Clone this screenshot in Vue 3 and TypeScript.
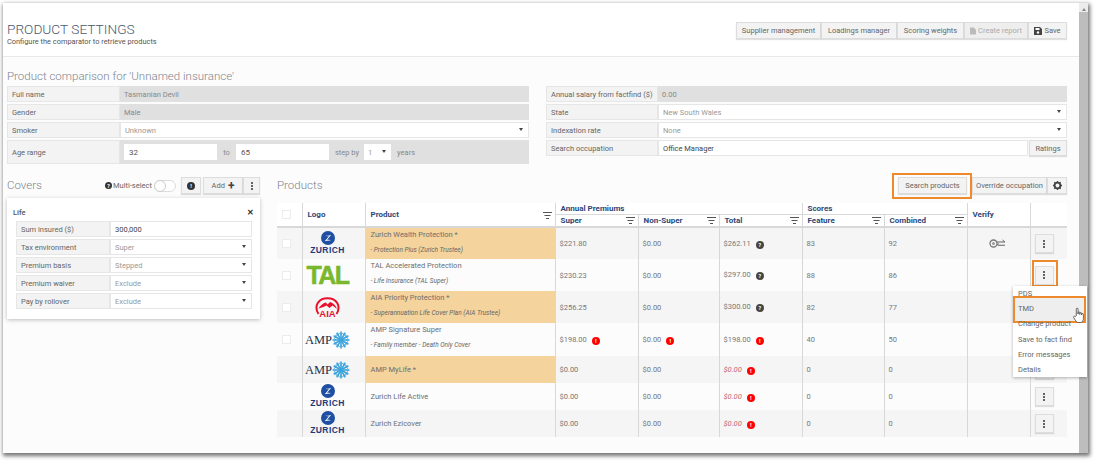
<script setup lang="ts">
interface Prod {
  logo: string; name: string; sub?: string; hl: boolean; check: boolean;
  sup: string; non: string; total: string; feat: string; comb: string;
  supErr?: boolean; nonErr?: boolean; totIcon: 'q' | 'e'; totRed?: boolean; h: number; verify?: boolean;
}
const products: Prod[] = [
  { logo: 'zurich', name: 'Zurich Wealth Protection *', sub: '- Protection Plus (Zurich Trustee)', hl: true, check: true, sup: '$221.80', non: '$0.00', total: '$262.11', feat: '83', comb: '92', totIcon: 'q', h: 32, verify: true },
  { logo: 'tal', name: 'TAL Accelerated Protection', sub: '- Life Insurance (TAL Super)', hl: false, check: true, sup: '$230.23', non: '$0.00', total: '$297.00', feat: '88', comb: '86', totIcon: 'q', h: 32 },
  { logo: 'aia', name: 'AIA Priority Protection *', sub: '- Superannuation Life Cover Plan (AIA Trustee)', hl: true, check: true, sup: '$256.25', non: '$0.00', total: '$300.00', feat: '82', comb: '77', totIcon: 'q', h: 32 },
  { logo: 'amp', name: 'AMP Signature Super', sub: '- Family member - Death Only Cover', hl: false, check: true, sup: '$198.00', non: '$0.00', total: '$198.00', feat: '40', comb: '50', supErr: true, nonErr: true, totIcon: 'e', h: 33 },
  { logo: 'amp', name: 'AMP MyLife *', hl: true, check: false, sup: '$0.00', non: '$0.00', total: '$0.00', feat: '0', comb: '0', totIcon: 'e', totRed: true, h: 27 },
  { logo: 'zurich', name: 'Zurich Life Active', hl: false, check: false, sup: '$0.00', non: '$0.00', total: '$0.00', feat: '0', comb: '0', totIcon: 'e', totRed: true, h: 27 },
  { logo: 'zurich', name: 'Zurich Ezicover', hl: false, check: false, sup: '$0.00', non: '$0.00', total: '$0.00', feat: '0', comb: '0', totIcon: 'e', totRed: true, h: 27 },
];
const coverRows = [
  { label: 'Tax environment', value: 'Super' },
  { label: 'Premium basis', value: 'Stepped' },
  { label: 'Premium waiver', value: 'Exclude' },
  { label: 'Pay by rollover', value: 'Exclude' },
];
const menu = ['PDS', 'TMD', 'Change product', 'Save to fact find', 'Error messages', 'Details'];
const flakes = [0, 30, 60, 90, 120, 150];
const subCols = ['Super', 'Non-Super', 'Total'];
const scoreCols = ['Feature', 'Combined'];
</script>

<template>
  <div class="shot">
    <div class="win">
      <div class="main">
        <header class="head">
          <div>
            <h1>PRODUCT SETTINGS</h1>
            <p>Configure the comparator to retrieve products</p>
          </div>
          <div class="btn-group">
            <button class="btn" style="width:85px">Supplier management</button>
            <button class="btn" style="width:76px">Loadings manager</button>
            <button class="btn" style="width:67px">Scoring weights</button>
            <button class="btn off" style="width:64px">
              <svg width="6" height="8" viewBox="0 0 7 8"><path d="M0 0h4.500l2.500 2.500v5.500h-7z" fill="#bbb"/></svg>
              Create report
            </button>
            <button class="btn" style="width:39px">
              <svg width="8" height="8" viewBox="0 0 8 8"><path d="M0 0h6l2 2v6h-8z" fill="#444"/><rect x="1.500" y="1" width="4" height="2" fill="#fff"/><circle cx="4" cy="5.500" r="1.200" fill="#fff"/></svg>
              Save
            </button>
          </div>
        </header>

        <h2 class="sec">Product comparison for 'Unnamed insurance'</h2>
        <div class="forms">
          <div class="form left">
            <div class="row"><span class="lab">Full name</span><span class="val ro">Tasmanian Devil</span></div>
            <div class="row"><span class="lab">Gender</span><span class="val ro">Male</span></div>
            <div class="row"><span class="lab">Smoker</span><span class="val sel">Unknown<i class="caret"></i></span></div>
            <div class="row tall">
              <span class="lab">Age range</span>
              <span class="val ro age">
                <span class="inp">32</span><span class="to">to</span><span class="inp">65</span>
                <span class="step">step by</span>
                <span class="mini">1<i class="caret"></i></span>
                <span class="yrs">years</span>
              </span>
            </div>
          </div>
          <div class="form right">
            <div class="row"><span class="lab">Annual salary from factfind ($)</span><span class="val ro">0.00</span></div>
            <div class="row"><span class="lab">State</span><span class="val sel">New South Wales<i class="caret"></i></span></div>
            <div class="row"><span class="lab">Indexation rate</span><span class="val sel">None<i class="caret"></i></span></div>
            <div class="row">
              <span class="lab">Search occupation</span>
              <span class="val occ">Office Manager</span>
              <button class="btn ratings">Ratings</button>
            </div>
          </div>
        </div>

        <div class="lower">
          <section class="covers">
            <div class="bar">
              <h2 class="sec">Covers</h2>
              <div class="ms">
                <span class="qi">?</span><span>Multi-select</span><span class="toggle"><i></i></span>
              </div>
              <button class="btn sq" style="width:20px"><span class="info">!</span></button>
              <div class="btn-group add">
                <button class="btn" style="width:40px">Add <b class="plus">+</b></button>
                <button class="btn" style="width:17px"><span class="dots"><i></i><i></i><i></i></span></button>
              </div>
            </div>
            <div class="card">
              <div class="card-h"><b>Life</b><span class="x">✕</span></div>
              <div class="crow"><span class="lab">Sum insured ($)</span><span class="val occ">300,000</span></div>
              <div v-for="r in coverRows" :key="r.label" class="crow">
                <span class="lab">{{ r.label }}</span><span class="val sel">{{ r.value }}<i class="caret"></i></span>
              </div>
            </div>
          </section>

          <section class="products">
            <div class="bar pbar">
              <h2 class="sec">Products</h2>
              <div class="pbtns">
                <button class="btn search" style="width:69px">Search products</button>
                <div class="btn-group">
                  <button class="btn" style="width:75px">Override occupation</button>
                  <button class="btn" style="width:20px">
                    <svg width="9" height="9" viewBox="0 0 10 10"><circle cx="5" cy="5" r="3.200" fill="none" stroke="#444" stroke-width="2"/><path d="M5 0v2M5 8v2M0 5h2M8 5h2M1.500 1.500l1.400 1.400M7.100 7.100l1.400 1.400M8.500 1.500L7.100 2.900M2.900 7.100L1.500 8.500" stroke="#444" stroke-width="1.500"/></svg>
                  </button>
                </div>
              </div>
            </div>
            <table class="tbl">
              <colgroup>
                <col style="width:25px"><col style="width:63px"><col style="width:190px"><col style="width:83px"><col style="width:81px"><col style="width:83px"><col style="width:82px"><col style="width:83px"><col style="width:63px"><col style="width:37px">
              </colgroup>
              <thead>
                <tr class="h1">
                  <th rowspan="2" class="nb"><span class="chk"></span></th>
                  <th rowspan="2">Logo</th>
                  <th rowspan="2" class="fp">Product<svg class="flt" width="9" height="7" viewBox="0 0 9 7"><path d="M0 .5h9M1.500 3.500h6M3 6.500h3" stroke="#555"/></svg></th>
                  <th colspan="3">Annual Premiums</th>
                  <th colspan="2">Scores</th>
                  <th rowspan="2" class="vf">Verify</th>
                  <th rowspan="2"></th>
                </tr>
                <tr class="h2">
                  <th v-for="c in [...subCols, ...scoreCols]" :key="c" class="fp">{{ c }}<svg class="flt" width="9" height="7" viewBox="0 0 9 7"><path d="M0 .5h9M1.500 3.500h6M3 6.500h3" stroke="#555"/></svg></th>
                </tr>
              </thead>
              <tbody>
                <tr v-for="(p, i) in products" :key="i" :class="{ odd: i % 2 === 0 }" :style="{ height: p.h + 'px' }">
                  <td class="nb cc"><span v-if="p.check" class="chk"></span></td>
                  <td class="logo">
                    <div v-if="p.logo === 'zurich'" class="zurich">
                      <svg width="14" height="14" viewBox="0 0 15 15"><circle cx="7.500" cy="7.500" r="7.500" fill="#1f4fa3"/><path d="M4 4.500c2.500 1 4 .5 7-.5L6.500 9.500c2 0 3 0 4.500 1-2.500-.5-4.500 0-7 .5l4.500-5.500c-2 .3-3 0-4.500-1z" fill="#fff"/></svg>
                      <span>ZURICH</span>
                    </div>
                    <div v-else-if="p.logo === 'tal'" class="tal">TAL</div>
                    <div v-else-if="p.logo === 'aia'" class="aia">
                      <svg width="25" height="18" viewBox="0 0 25 18"><path d="M3.500 17C-1.500 9 3.500 1.200 12.500 1.200S26.500 9 21.500 17" fill="none" stroke="#e8112d" stroke-width="2"/><path d="M3.500 11.500C6 7.500 8.500 6 11 5.500l1.500 2L15 5c3.500 1 5.500 3.500 7 7l-4.500-3.500-3 2.500-3-2.500-3 1.500z" fill="#e8112d"/></svg>
                      <span>AIA</span>
                    </div>
                    <div v-else class="amp">
                      <span>AMP</span>
                      <svg width="18" height="18" viewBox="-9 -9 18 18">
                        <g v-for="a in flakes" :key="a" :transform="`rotate(${a})`"><path d="M0-8.500V8.500" stroke="#3ea5dc" stroke-width="1.600"/><path d="M-1.800-7L0-5.500 1.800-7M-1.800 7L0 5.500 1.800 7" fill="none" stroke="#3ea5dc" stroke-width=".8"/></g>
                      </svg>
                    </div>
                  </td>
                  <td class="pn" :class="{ hl: p.hl, top: p.sub }">
                    <div>{{ p.name }}</div>
                    <div v-if="p.sub" class="sub">{{ p.sub }}</div>
                  </td>
                  <td>{{ p.sup }}<span v-if="p.supErr" class="err">!</span></td>
                  <td>{{ p.non }}<span v-if="p.nonErr" class="err">!</span></td>
                  <td>
                    <span :class="{ redt: p.totRed }">{{ p.total }}</span>
                    <span v-if="p.totIcon === 'q'" class="qi big">?</span>
                    <span v-else class="err">!</span>
                  </td>
                  <td>{{ p.feat }}</td>
                  <td>{{ p.comb }}</td>
                  <td class="cc">
                    <svg v-if="p.verify" class="vicon" width="17" height="9" viewBox="0 0 17 9"><circle cx="4.500" cy="4.500" r="3.500" fill="none" stroke="#777" stroke-width="1.300"/><circle cx="4.500" cy="4.500" r="1.500" fill="#999"/><path d="M8 3h8M9 6.200h7" stroke="#666" stroke-width="1.100"/><path d="M13.500 1l2.500 2M10 4.500L8 6.200" fill="none" stroke="#666"/></svg>
                  </td>
                  <td class="cc act">
                    <button class="btn more" :class="{ mark: i === 1 }"><span class="dots"><i></i><i></i><i></i></span></button>
                  </td>
                </tr>
              </tbody>
            </table>
          </section>
        </div>
      </div>
      <div class="scroll"><i class="up"></i><div class="thumb"></div></div>

      <ul class="menu">
        <li v-for="m in menu" :key="m" :class="{ tmd: m === 'TMD' }">{{ m }}
          <svg v-if="m === 'TMD'" class="hand" width="11" height="16" viewBox="0 0 12 18"><path d="M3.500 10V2.300a1 1 0 0 1 2 0V8V6.500a1 1 0 0 1 2 0V8.500V7.300a1 1 0 0 1 2 0V9V8.300a1 1 0 0 1 2 0v4.700c0 2-1 4.500-3 4.500H5.500c-1.500 0-2-1-3-2.500L.600 12c-.8-1.300 1-2.300 1.900-1.200z" fill="#fff" stroke="#444" stroke-width=".9"/></svg>
        </li>
      </ul>
    </div>
  </div>
</template>

<style scoped>
.shot { width: 1100px; height: 466px; padding: 3px 0 0 3px; box-sizing: border-box; background: #fff; overflow: hidden; font-family: Roboto, "Liberation Sans", sans-serif; font-size: 7.500px; color: #777; }
.win { position: relative; width: 1085px; height: 450px; display: flex; background: #fcfcfc; box-shadow: 1px 2px 4px 1px rgba(0,0,0,.55); }
.main { width: 1076px; box-sizing: border-box; padding: 0 0 0 4px; }
.head { height: 54px; margin-left: -4px; padding: 19px 12px 0 4px; box-sizing: border-box; display: flex; justify-content: space-between; background: #fff; border-bottom: 1px solid #e8e8e8; }
h1 { margin: 0; font-size: 13.700px; line-height: 14px; font-weight: 300; color: #4a5a70; }
.head p { margin: 1px 0 0; font-size: 7.400px; line-height: 10px; color: #555; }
.btn-group { display: flex; height: 17px; }
.btn { height: 17px; padding: 0; font: inherit; color: #666; background: #f3f3f3; border: 1px solid #ddd; box-shadow: 0 1px 1px rgba(0,0,0,.12); display: inline-flex; align-items: center; justify-content: center; gap: 2px; box-sizing: border-box; white-space: nowrap; }
.btn.off { color: #aaa; background: #eee; }
.sec { margin: 0; font-size: 11.500px; line-height: 16px; font-weight: 300; color: #7d8490; }
.head + .sec { margin-top: 11px; }
.forms { display: flex; gap: 17px; margin-top: 2px; padding-right: 12px; }
.form { display: flex; flex-direction: column; gap: 2px; }
.left { width: 522px; }
.right { width: 521px; }
.row { display: flex; height: 16px; }
.row.tall { height: 24px; }
.lab { flex: none; box-sizing: border-box; padding-left: 4px; display: flex; align-items: center; background: #f3f3f3; border: 1px solid #e6e6e6; color: #666; white-space: nowrap; }
.left .lab { width: 113px; }
.right .lab { width: 112px; }
.val { flex: 1; min-width: 0; box-sizing: border-box; padding-left: 4px; display: flex; align-items: center; position: relative; }
.ro { background: #e0e0e0; color: #888; }
.sel { background: #fff; border: 1px solid #e6e6e6; color: #999; }
.occ { background: #fff; border: 1px solid #e6e6e6; color: #444; }
.caret { position: absolute; right: 5px; top: 50%; margin-top: -2px; width: 0; height: 0; border: 2.500px solid transparent; border-top: 3.500px solid #444; border-bottom: 0; }
.age { padding-left: 4px; }
.inp { width: 93px; height: 16px; box-sizing: border-box; background: #fff; color: #555; padding-left: 5px; display: flex; align-items: center; font-size: 8px; }
.to { width: 19px; text-align: center; }
.step { margin-left: 6px; }
.mini { position: relative; width: 27px; height: 16px; margin-left: 5px; box-sizing: border-box; padding-left: 4px; background: #fff; display: flex; align-items: center; color: #999; }
.yrs { margin-left: 6px; }
.ratings { width: 38px; height: 16px; flex: none; margin-left: 1px; }
.lower { display: flex; margin-top: 11px; }
.covers { width: 253px; flex: none; }
.bar { display: flex; align-items: center; height: 21px; }
.bar .sec { flex: 1; margin-top: -2px; }
.covers .bar .sec { flex: none; width: 98px; }
.ms { width: 76px; display: flex; align-items: center; color: #666; }
.qi { width: 7px; height: 7px; border-radius: 50%; background: #333; color: #fff; font-size: 6px; font-weight: 700; line-height: 7px; text-align: center; display: inline-block; margin-right: 1px; flex: none; }
.qi.big { width: 8px; height: 8px; line-height: 8px; margin-left: 5px; margin-right: 0; vertical-align: -1px; background: #444; }
.toggle { width: 22px; height: 12px; margin-left: 2px; border: 1px solid #ddd; border-radius: 6px; box-sizing: border-box; background: #fff; position: relative; flex: none; }
.toggle i { position: absolute; left: -1px; top: -1px; width: 12px; height: 12px; box-sizing: border-box; border-radius: 50%; background: #fff; border: 1px solid #ccc; }
.info { width: 8px; height: 8px; border-radius: 50%; background: #333; color: #fff; font-size: 6px; font-weight: 700; line-height: 8px; text-align: center; }
.add { margin-left: 2px; }
.plus { font-size: 12px; line-height: 8px; color: #444; margin-left: 1px; }
.dots { display: inline-flex; flex-direction: column; gap: 1px; }
.dots i { width: 2px; height: 2px; background: #333; border-radius: 50%; display: block; }
.card { width: 253px; height: 121px; margin-top: 2px; box-sizing: border-box; padding: 0 8px 0 9px; background: #fff; box-shadow: 0 1px 4px rgba(0,0,0,.25); display: flex; flex-direction: column; gap: 2px; }
.card-h { height: 21px; margin: 0 -2px 0 -3px; padding-top: 7px; box-sizing: border-box; flex: none; display: flex; justify-content: space-between; align-items: center; }
.card-h b { font-weight: 500; color: #555; }
.x { color: #333; font-size: 8px; font-weight: 700; }
.crow { display: flex; height: 16px; flex: none; }
.crow .lab { width: 94px; }
.products { width: 790px; flex: none; margin-left: 17px; }
.pbtns { display: flex; gap: 5px; margin-right: 0; }
.search { position: relative; }
.search::after { content: ""; position: absolute; left: -7px; top: -5px; right: -6px; bottom: -6px; border: 2px solid #ef8a2c; }
.tbl { width: 790px; margin-top: 7px; border-collapse: collapse; table-layout: fixed; }
.tbl th { text-align: left; font-weight: 700; color: #2d4877; padding: 0 0 0 5px; border-left: 1px solid #d8d8d8; position: relative; background: #fff; font-size: 8px; }
.tbl th.nb, .tbl td.nb { border-left: 0; padding-left: 5px; }
.h1 { height: 11px; }
.h2 { height: 13px; }
.h1 th { vertical-align: middle; }
.h2 th { border-top: 1px solid #d8d8d8; }
thead { border-bottom: 2px solid #d8d8d8; }
.flt { position: absolute; right: 3px; bottom: 2px; }
th[rowspan] .flt { bottom: 7px; }
.tbl td { padding: 0 0 0 4px; border-left: 1px solid #d8d8d8; background: #fcfcfc; color: #777; white-space: nowrap; overflow: hidden; }
.odd td { background: #f5f5f5; }
.tbl td.hl { background: #f4d39c; }
.tbl td.pn { padding-left: 5px; color: #6e6e6e; line-height: 12px; }
.tbl td.top { vertical-align: top; padding-top: 1px; }
.sub { font-style: italic; font-size: 6.500px; margin-top: 4px; line-height: 10px; color: #666; }
.cc { text-align: center; }
.tbl td.cc { padding: 0; }
.tbl td.nb.cc { text-align: left; padding-left: 5px; }
.chk { display: block; width: 9px; height: 9px; box-sizing: border-box; background: #fff; border: 1px solid #ececec; }
.logo { text-align: center; }
.tbl td.logo { padding: 0 12px 0 0; overflow: visible; }
.zurich { display: flex; flex-direction: column; align-items: center; line-height: 11px; color: #1e3a7a; font-weight: 700; font-size: 8.500px; letter-spacing: .4px; font-family: "Liberation Sans", sans-serif; }
.tal { font: 700 25px/24px "Liberation Sans", sans-serif; color: #79b82d; letter-spacing: -1.500px; -webkit-text-stroke: .5px #79b82d; }
.aia { display: flex; flex-direction: column; align-items: center; color: #e8112d; font: 700 9.500px/9px "Liberation Sans", sans-serif; }
.aia svg { margin-bottom: -6px; }
.amp { display: flex; align-items: center; justify-content: center; color: #22304f; font: 400 12.500px/14px "Liberation Serif", serif; }
.err { display: inline-block; width: 8px; height: 8px; margin-left: 5px; border-radius: 50%; background: #f00; color: #fff; font-size: 6px; line-height: 8px; font-weight: 700; text-align: center; vertical-align: -1px; }
.redt { color: #c0626f; font-style: italic; }
.vicon { vertical-align: middle; margin-right: 3px; }
.more { width: 19px; height: 19px; position: relative; }
.more.mark::after { content: ""; position: absolute; left: -4px; top: -7px; right: -5px; bottom: -3px; border: 2px solid #ef8a2c; }
.tbl td.act { text-align: left; padding-left: 4px; overflow: visible; }
.scroll { width: 9px; background: #ececec; position: relative; }
.scroll .up { position: absolute; top: 5px; left: 2.500px; border: 2px solid transparent; border-bottom: 3px solid #888; border-top: 0; }
.thumb { position: absolute; top: 9px; bottom: 0; left: 0; right: 0; background: #bdbdbd; }
.menu { position: absolute; left: 1010px; top: 283px; width: 74px; height: 91px; box-sizing: border-box; margin: 0; padding: 0; list-style: none; background: #fff; box-shadow: 0 1px 3px rgba(0,0,0,.3); isolation: isolate; }
.menu li { height: 15.200px; line-height: 15.200px; padding-left: 5px; color: #666; white-space: nowrap; position: relative; }
.tmd::after { content: ""; position: absolute; left: 0; right: 1px; top: -5px; height: 27px; background: #eee; border: 2px solid #ef8a2c; box-sizing: border-box; z-index: -1; }
.hand { position: absolute; right: 3px; top: 6px; z-index: 2; }
</style>
